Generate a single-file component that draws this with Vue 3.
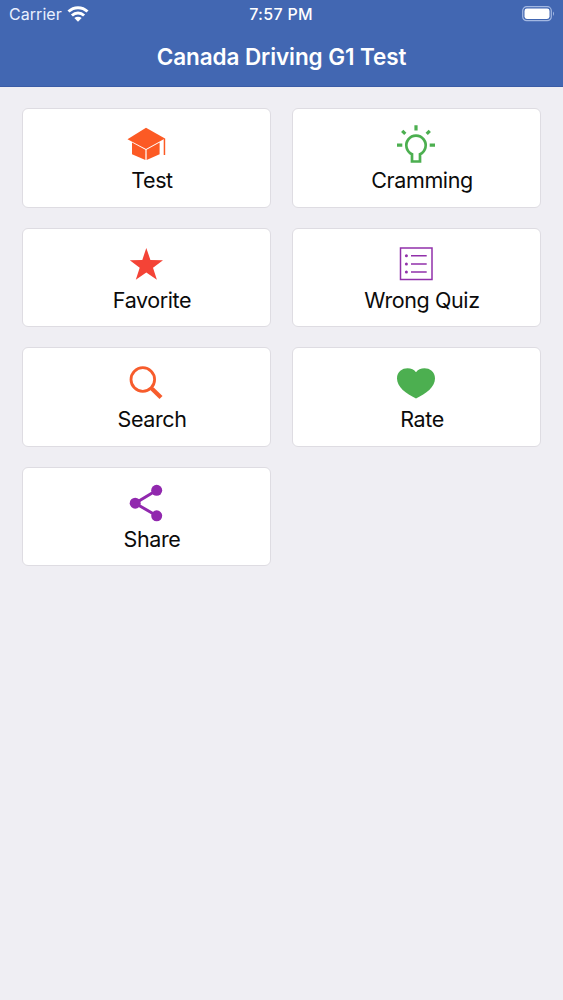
<script setup>
const items = [
  { label: 'Test', icon: 'cap', color: '#fc5a24' },
  { label: 'Cramming', icon: 'bulb', color: '#4caf50' },
  { label: 'Favorite', icon: 'star', color: '#f44336' },
  { label: 'Wrong Quiz', icon: 'list', color: '#9130aa' },
  { label: 'Search', icon: 'search', color: '#f75c2c' },
  { label: 'Rate', icon: 'heart', color: '#4caf50' },
  { label: 'Share', icon: 'share', color: '#9128ae' },
]
</script>

<template>
  <div class="screen">
    <header class="header">
      <div class="status">
        <div class="carrier">
          <span>Carrier</span>
          <svg class="wifi" width="22" height="16" viewBox="0 0 22 16" fill="none" stroke="#fff" stroke-width="3">
            <path d="M1.500 5.500C7 .4 15 .4 20.500 5.500" />
            <path d="M4.900 9.500C8.500 6.200 13.500 6.200 17.100 9.500" />
            <path d="M11 15.700L7.300 12C9.500 10.200 12.500 10.200 14.700 12Z" fill="#fff" stroke="none" />
          </svg>
        </div>
        <span class="time">7:57 PM</span>
        <svg class="battery" width="34" height="16" viewBox="0 0 34 16">
          <rect x=".7" y=".7" width="28.600" height="14" rx="4" fill="none" stroke="#a3b8e2" stroke-width="1.200" />
          <rect x="2.500" y="2.500" width="25" height="10.400" rx="2.400" fill="#fff" />
          <path d="M31 5.500Q33 7.700 31 10Z" fill="#a3b8e2" />
        </svg>
      </div>
      <h1 class="title">Canada Driving G1 Test</h1>
    </header>
    <main class="grid">
      <button v-for="item in items" :key="item.label" class="card" type="button">
        <svg class="icon" width="40" height="40" viewBox="0 0 40 40" :style="{ color: item.color }">
          <g v-if="item.icon === 'cap'" fill="currentColor">
            <path d="M20 3.700L39 14.500L20 25L1.500 15.300Z" />
            <path d="M6 18.500L19.400 25.800V36L6 30.300Z" />
            <path d="M20.600 25.800L33.600 18.500V30.300L20.600 36Z" />
            <path d="M37.700 14.500H39.200V31H37.700Z" />
          </g>
          <g v-else-if="item.icon === 'bulb'" fill="none" stroke="currentColor" stroke-width="2.700">
            <path d="M16 37.500V30.200A9.700 9.700 0 1 1 24 30.200V37.500Z" />
            <path stroke-width="3.200" d="M20 1.200V6.500M1 21.200H6.300M33.700 21.200H39M6.200 6.800L9.300 9.900M33.800 6.800L30.700 9.900" />
          </g>
          <path v-else-if="item.icon === 'star'" fill="currentColor"
            d="M20.300 4L24.400 15.900L37 16.200L27 23.800L30.900 35.800L20.300 28.600L9.800 35.800L13.700 23.800L3.800 16.200L16.300 15.900Z" />
          <g v-else-if="item.icon === 'list'" fill="none" stroke="currentColor" stroke-width="1.500">
            <rect x="4.500" y="4" width="31.500" height="31.500" />
            <path d="M15 11.700H30.700M15 19.900H30.700M15 28H30.700" />
            <g fill="currentColor" stroke="none">
              <circle cx="10.400" cy="11.700" r="1.500" />
              <circle cx="10.400" cy="19.900" r="1.500" />
              <circle cx="10.400" cy="28" r="1.500" />
            </g>
          </g>
          <g v-else-if="item.icon === 'search'" fill="none" stroke="currentColor">
            <circle cx="16.800" cy="16.500" r="11.800" stroke-width="2.800" />
            <path d="M24.800 24.500L27.500 27.200" stroke-width="2.800" />
            <path d="M26 25.700L35 34.600" stroke-width="4.200" />
          </g>
          <path v-else-if="item.icon === 'heart'" fill="currentColor"
            d="M20 9.300C24 2.600 39 3.600 39 15.500C39 24 30 30.800 20 35.400C10 30.800 1 24 1 15.500C1 3.600 16 2.600 20 9.300Z" />
          <g v-else fill="currentColor">
            <path d="M30.700 7.300L9.200 20.200L30.700 32.800" fill="none" stroke="currentColor" stroke-width="3" />
            <circle cx="30.700" cy="7.300" r="5.500" />
            <circle cx="9.200" cy="20.200" r="5.500" />
            <circle cx="30.700" cy="32.800" r="5.500" />
          </g>
        </svg>
        <span class="label">{{ item.label }}</span>
      </button>
    </main>
  </div>
</template>

<style>
body {
  margin: 0;
  background: #efeef3;
}
</style>

<style scoped>
.screen {
  min-height: 1000px;
  background: #efeef3;
  font-family: Inter, "Liberation Sans", sans-serif;
}
.header {
  box-sizing: border-box;
  height: 87px;
  background: #4267b2;
  border-bottom: 1px solid #3b5ca6;
  color: #fff;
}
.status {
  display: grid;
  grid-template-columns: 1fr auto 1fr;
  align-items: center;
  height: 28px;
  padding: 0 7px 0 9px;
  font-size: 16px;
}
.carrier {
  display: flex;
  align-items: center;
  gap: 5px;
  color: #e9f0ff;
  letter-spacing: 0.05px;
}
.wifi {
  margin-top: -1px;
}
.time {
  margin-left: -3px;
  font-weight: 500;
  letter-spacing: 0.3px;
}
.battery {
  justify-self: end;
}
.title {
  margin: 13px 0 0;
  font-size: 22.500px;
  line-height: 32px;
  font-weight: 600;
  letter-spacing: -0.08px;
  text-align: center;
}
.grid {
  display: grid;
  grid-template-columns: 249px 249px;
  grid-auto-rows: 99.500px;
  gap: 20px 21px;
  padding: 21px 22px;
}
.card {
  box-sizing: border-box;
  display: flex;
  flex-direction: column;
  align-items: center;
  padding: 15px 0 0;
  border: 1px solid #dedce2;
  border-radius: 6px;
  background: #fff;
  font: inherit;
  color: #0b0b0b;
}
.icon {
  display: block;
  flex: none;
  margin-right: 1px;
}
.label {
  margin-left: 11px;
  font-size: 21.500px;
  line-height: 32px;
  letter-spacing: -0.4px;
  white-space: nowrap;
}
</style>
